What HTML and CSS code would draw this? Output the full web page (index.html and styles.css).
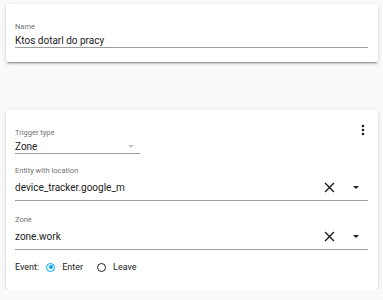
FILE: index.html
```html
<!DOCTYPE html>
<html lang="en">
<head>
    <meta charset="UTF-8">
    <title>Automation editor</title>
    <link rel="stylesheet" href="styles.css">
</head>
<body>
    <!-- Name card -->
    <div class="card name-card">
        <div class="field">
            <label class="field-label">Name</label>
            <div class="field-input">Ktos dotarl do pracy</div>
        </div>
    </div>

    <!-- Trigger card -->
    <div class="card trigger-card">
        <div class="card-head">
            <div class="field type-field">
                <label class="field-label">Trigger type</label>
                <div class="field-input">
                    <span class="grow">Zone</span>
                    <span class="caret light"></span>
                </div>
            </div>
            <svg class="menu-icon" viewBox="0 0 24 24" width="16" height="16">
                <path d="M12 16a2 2 0 1 1 0 4 2 2 0 0 1 0-4zm0-6a2 2 0 1 1 0 4 2 2 0 0 1 0-4zm0-6a2 2 0 1 1 0 4 2 2 0 0 1 0-4z" fill="#212121"/>
            </svg>
        </div>

        <div class="field combo">
            <label class="field-label">Entity with location</label>
            <div class="field-input tall">
                <span class="grow">device_tracker.google_m</span>
                <svg class="clear-icon" viewBox="0 0 24 24" width="17" height="17">
                    <path d="M19 6.41 17.59 5 12 10.59 6.41 5 5 6.41 10.59 12 5 17.59 6.41 19 12 13.41 17.59 19 19 17.59 13.41 12z" fill="#212121"/>
                </svg>
                <span class="caret"></span>
            </div>
        </div>

        <div class="field combo">
            <label class="field-label">Zone</label>
            <div class="field-input tall">
                <span class="grow">zone.work</span>
                <svg class="clear-icon" viewBox="0 0 24 24" width="17" height="17">
                    <path d="M19 6.41 17.59 5 12 10.59 6.41 5 5 6.41 10.59 12 5 17.59 6.41 19 12 13.41 17.59 19 19 17.59 13.41 12z" fill="#212121"/>
                </svg>
                <span class="caret"></span>
            </div>
        </div>

        <div class="event-row">
            <span class="event-label">Event:</span>
            <span class="radio checked"></span>
            <span class="radio-text">Enter</span>
            <span class="radio"></span>
            <span class="radio-text">Leave</span>
        </div>
    </div>
</body>
</html>
```

FILE: styles.css
```css
/* Page */
body {
    margin: 0;
    padding: 4px 5px 0 6px;
    background: #fafafa;
    font-family: Roboto, "Noto Sans", Arial, sans-serif;
    color: #212121;
}

/* Cards */
.card {
    background: #fff;
    border-radius: 2px;
    box-shadow: 0 2px 2px 0 rgba(0, 0, 0, 0.14), 0 1px 5px 0 rgba(0, 0, 0, 0.12), 0 3px 1px -2px rgba(0, 0, 0, 0.2);
    padding: 0 10px 0 9px;
}

.name-card {
    height: 58px;
    padding-top: 18px;
    box-sizing: border-box;
}

.trigger-card {
    margin-top: 48px;
    height: 179px;
    padding-top: 14px;
    box-sizing: border-box;
}

/* Text fields */
.field-label {
    display: block;
    font-size: 7.5px;
    line-height: 10px;
    color: #737373;
}

.field-input {
    display: flex;
    align-items: center;
    height: 14px;
    font-size: 10px;
    border-bottom: 1px solid #9e9e9e;
    padding-top: 1px;
}

.field-input.tall {
    height: 18px;
    padding: 0 0 4px;
    margin-top: 2px;
}

.grow {
    flex: 1;
}

/* Trigger type row */
.card-head {
    display: flex;
    justify-content: space-between;
    align-items: flex-start;
}

.type-field {
    width: 125px;
    margin-top: 4px;
}

.menu-icon {
    margin: -2px -3px 0 0;
}

.combo {
    margin-top: 12px;
}

.combo + .combo {
    margin-top: 14px;
}

/* Dropdown caret */
.caret {
    width: 0;
    height: 0;
    border-left: 3.5px solid transparent;
    border-right: 3.5px solid transparent;
    border-top: 3.5px solid #212121;
    margin: 0 9px 0 0;
}

.caret.light {
    border-top-color: #c4c4c4;
    margin-right: 6px;
}

.clear-icon {
    margin-right: 15px;
}

/* Event radios */
.event-row {
    display: flex;
    align-items: center;
    margin-top: 12px;
    font-size: 9px;
    color: #212121;
}

.event-label {
    margin-right: 7px;
}

.radio {
    width: 7px;
    height: 7px;
    border: 1.5px solid #212121;
    border-radius: 50%;
    position: relative;
}

.radio.checked {
    border-color: #03a9f4;
}

.radio.checked::after {
    content: '';
    position: absolute;
    top: 1.5px;
    left: 1.5px;
    width: 4px;
    height: 4px;
    border-radius: 50%;
    background: #03a9f4;
}

.radio-text {
    margin: 0 14px 0 7px;
}
```
